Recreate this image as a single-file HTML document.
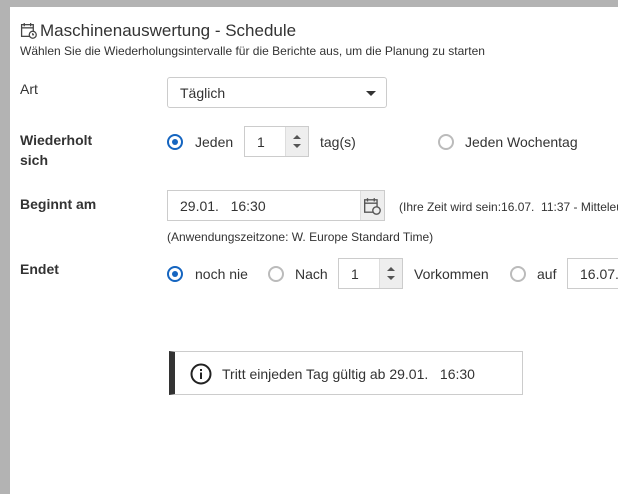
<!DOCTYPE html>
<html><head><style>
body{margin:0;width:618px;height:494px;overflow:hidden;background:#b3b3b3;font-family:"Liberation Sans",sans-serif;color:#333;position:relative}
.dlg{position:absolute;left:10px;top:7px;width:608px;height:487px;background:#fff;overflow:hidden}
.a{position:absolute;white-space:nowrap}
.lbl{font-size:14px;font-weight:bold;color:#333}
.box{position:absolute;border:1px solid #ccc;border-radius:3px;background:#fff;box-sizing:border-box}
.radio{position:absolute;width:16px;height:16px;border:2px solid #bbb;border-radius:50%;box-sizing:border-box}
.radio.on{border-color:#1565c0}
.radio.on:after{content:"";position:absolute;left:3px;top:3px;width:6px;height:6px;border-radius:50%;background:#1565c0}
.t{font-size:14px;color:#333}
.spin{position:absolute;right:0;top:0;bottom:0;width:22px;background:#eee;border-left:1px solid #ddd}
.spin:before{content:"";position:absolute;left:7px;top:8px;border:4px solid transparent;border-bottom:4px solid #555;border-top:0}
.spin:after{content:"";position:absolute;left:7px;bottom:8px;border:4px solid transparent;border-top:4px solid #555;border-bottom:0}
</style></head><body>
<div class="dlg">
<svg class="a" style="left:10px;top:15px" width="17" height="17" viewBox="0 0 16 16" fill="none" stroke="#444" stroke-width="1.2"><rect x="1.5" y="2.5" width="11" height="11"/><line x1="1.5" y1="5.5" x2="12.5" y2="5.5"/><line x1="4" y1="1" x2="4" y2="4"/><line x1="10" y1="1" x2="10" y2="4"/><circle cx="12" cy="12" r="3.3" fill="#fff"/><path d="M12 10.5V12h1.2"/></svg>
<div class="a" style="left:30px;top:14px;font-size:17px;color:#333">Maschinenauswertung - Schedule</div>
<div class="a" style="left:10px;top:37px;font-size:12px;color:#333">Wählen Sie die Wiederholungsintervalle für die Berichte aus, um die Planung zu starten</div>

<div class="a lbl" style="left:10px;top:74px;font-weight:normal">Art</div>
<div class="box" style="left:157px;top:70px;width:220px;height:31px"><span class="a t" style="left:12px;top:7px">Täglich</span><span class="a" style="right:10px;top:13px;border:5px solid transparent;border-top:5px solid #333;border-bottom:0"></span></div>

<div class="a lbl" style="left:10px;top:123px;line-height:20px">Wiederholt<br>sich</div>
<div class="radio on" style="left:157px;top:127px"></div>
<div class="a t" style="left:185px;top:127px">Jeden</div>
<div class="box" style="left:234px;top:119px;width:65px;height:31px;border-radius:0"><span class="a t" style="left:12px;top:7px">1</span><div class="spin"></div></div>
<div class="a t" style="left:310px;top:127px">tag(s)</div>
<div class="radio" style="left:428px;top:127px"></div>
<div class="a t" style="left:455px;top:127px">Jeden Wochentag</div>

<div class="a lbl" style="left:10px;top:189px">Beginnt am</div>
<div class="box" style="left:157px;top:183px;width:218px;height:31px;border-radius:0"><span class="a t" style="left:12px;top:7px">29.01.&nbsp;&nbsp; 16:30</span><div class="a" style="right:0;top:0;bottom:0;width:23px;background:#eee;border-left:1px solid #ddd"></div>
<svg class="a" style="right:3px;top:6px" width="18" height="18" viewBox="0 0 16 16" fill="none" stroke="#555" stroke-width="1.2"><rect x="1.5" y="2.5" width="11" height="11"/><line x1="1.5" y1="5.5" x2="12.5" y2="5.5"/><line x1="4" y1="1" x2="4" y2="4"/><line x1="10" y1="1" x2="10" y2="4"/><circle cx="12" cy="12" r="3.3" fill="#eee"/></svg></div>
<div class="a" style="left:389px;top:193px;font-size:12px">(Ihre Zeit wird sein:16.07.&nbsp; 11:37 - Mitteleuropäische Zeit)</div>
<div class="a" style="left:157px;top:223px;font-size:12px">(Anwendungszeitzone: W. Europe Standard Time)</div>

<div class="a lbl" style="left:10px;top:254px">Endet</div>
<div class="radio on" style="left:157px;top:259px"></div>
<div class="a t" style="left:185px;top:259px">noch nie</div>
<div class="radio" style="left:258px;top:259px"></div>
<div class="a t" style="left:285px;top:259px">Nach</div>
<div class="box" style="left:328px;top:251px;width:65px;height:31px;border-radius:0"><span class="a t" style="left:12px;top:7px">1</span><div class="spin"></div></div>
<div class="a t" style="left:404px;top:259px">Vorkommen</div>
<div class="radio" style="left:500px;top:259px"></div>
<div class="a t" style="left:527px;top:259px">auf</div>
<div class="box" style="left:557px;top:251px;width:80px;height:31px;border-radius:0"><span class="a t" style="left:12px;top:7px">16.07.2024</span></div>

<div class="a" style="left:159px;top:344px;width:354px;height:44px;border:1px solid #ccc;border-left:6px solid #333;box-sizing:border-box"></div>
<svg class="a" style="left:180px;top:356px" width="22" height="22" viewBox="0 0 22 22"><circle cx="11" cy="11" r="9.5" fill="none" stroke="#222" stroke-width="2"/><rect x="10" y="9.5" width="2" height="6.5" fill="#222"/><rect x="10" y="6" width="2" height="2" fill="#222"/></svg>
<div class="a t" style="left:212px;top:359px">Tritt einjeden Tag gültig ab 29.01.&nbsp;&nbsp; 16:30</div>
</div>
</body></html>
